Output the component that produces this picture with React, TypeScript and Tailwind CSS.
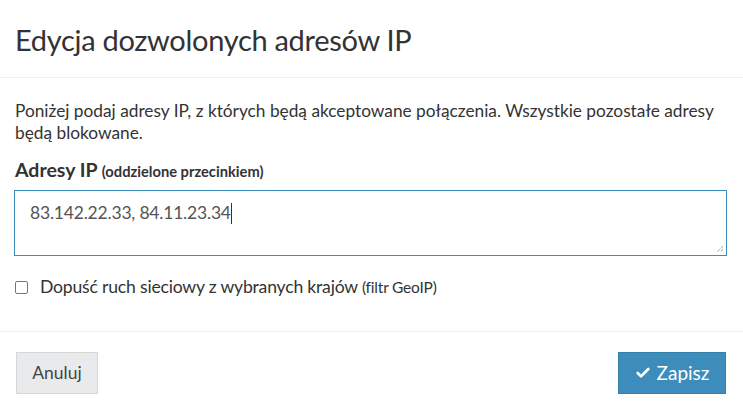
import { Check } from "lucide-react";

export default function App() {
  return (
    <div className="w-[743px] h-[409px] bg-white text-[#333333] font-['Lato',sans-serif] overflow-hidden">
      {/* Header */}
      <div className="h-[78px] px-[15px] flex items-center border-b border-[#eeeeee]">
        <h2 className="text-[29px] leading-none text-[#333333] pt-[2px] tracking-[-0.3px]">
          Edycja dozwolonych adresów IP
        </h2>
      </div>

      {/* Body */}
      <div className="px-[15px] pt-[22px] h-[254px] border-b border-[#eeeeee]">
        <p className="text-[17.3px] leading-[22px] text-[#333333]">
          Poniżej podaj adresy IP, z których będą akceptowane połączenia. Wszystkie pozostałe adresy będą blokowane.
        </p>

        <label className="block mt-[16px] text-[19.5px] leading-[20px] font-bold text-[#333333]">
          Adresy IP <span className="text-[14.7px]">(oddzielone przecinkiem)</span>
        </label>

        <div className="relative mt-[9px] -ml-px w-[713px] h-[66px] border border-[#3c8dbc] pl-[15px] pt-[10px]">
          <span className="text-[17.5px] leading-[20px] text-[#555555] tracking-[-0.2px]">83.142.22.33, 84.11.23.34</span>
          <span className="inline-block align-middle w-px h-[21px] bg-[#333333] -mt-[3px]" />
          <svg className="absolute right-[2px] bottom-[2px]" width="8" height="8" viewBox="0 0 8 8">
            <path d="M7 1 L1 7 M7 4 L4 7" stroke="#777" strokeWidth="1" strokeDasharray="1 1" />
          </svg>
        </div>

        <div className="mt-[21px] flex items-center gap-[12px]">
          <span className="w-[13px] h-[13px] border border-[#767676] rounded-[2px] bg-white" />
          <span className="text-[17.6px] leading-[20px] text-[#333333] tracking-[-0.2px]">
            Dopuść ruch sieciowy z wybranych krajów <span className="text-[15.5px]">(filtr GeoIP)</span>
          </span>
        </div>
      </div>

      {/* Footer */}
      <div className="px-[16px] pt-[20px] flex items-start justify-between pr-[17px]">
        <button className="h-[42px] w-[82px] bg-[#e9eaec] border border-[#d6d6d6] text-[17.5px] text-[#444444]">
          Anuluj
        </button>
        <button className="h-[42px] w-[108px] flex items-center justify-center gap-[6px] bg-[#3c8dbc] border border-[#367fa9] text-white text-[19px]">
          <Check className="w-[16px] h-[16px]" strokeWidth={4} />
          Zapisz
        </button>
      </div>
    </div>
  );
}
